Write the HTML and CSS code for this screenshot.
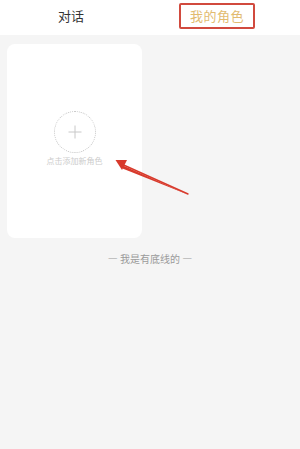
FILE: index.html
```html
<!DOCTYPE html>
<html lang="zh">
<head>
<meta charset="utf-8">
<link rel="stylesheet" href="styles.css">
</head>
<body>
<div class="page">
  <div class="tabs">
    <div class="tab">对话</div>
    <div class="tab active"><span class="active-box">我的角色</span></div>
  </div>
  <div class="content">
    <div class="grid">
      <div class="card">
        <div class="add-circle">
          <svg width="14" height="14" viewBox="0 0 14 14"><path d="M7 0.5V13.5M0.5 7H13.5" stroke="#c8c8c8" stroke-width="1" fill="none"/></svg>
        </div>
        <div class="add-label">点击添加新角色</div>
      </div>
    </div>
    <div class="end-line">— 我是有底线的 —</div>
  </div>
  <svg class="arrow" width="300" height="449" viewBox="0 0 300 449">
    <path d="M189 195 L123 165.5 L122.5 168.5 Z" fill="#d83a2c"/>
    <path d="M188 194 L122.5 164.5" stroke="#d83a2c" stroke-width="1.4" fill="none" stroke-linecap="round"/>
    <path d="M115.5 160 L127 160 L122 170 Z" fill="#d83a2c"/>
  </svg>
</div>
</body>
</html>
```
FILE: styles.css
```css
html, body {
  margin: 0;
  padding: 0;
  background: #f5f5f5;
  font-family: "Noto Sans CJK SC", "Noto Sans", sans-serif;
}
.page {
  position: relative;
  width: 300px;
  height: 449px;
  background: #f5f5f5;
  overflow: hidden;
}
.tabs {
  display: grid;
  grid-template-columns: 142px 150px;
  height: 35px;
  box-sizing: border-box;
  padding-top: 3px;
  background: #ffffff;
  align-items: start;
}
.tab {
  display: flex;
  justify-content: center;
  align-items: center;
  height: 26px;
  font-size: 13px;
  color: #333333;
  line-height: 18px;
}
.tab.active {
  color: #e2bb70;
}
.active-box {
  display: inline-block;
  box-sizing: border-box;
  width: 76px;
  height: 26px;
  line-height: 22px;
  text-align: center;
  border: 2px solid #d14a3e;
  border-radius: 2px;
  letter-spacing: 0.5px;
}
.content {
  padding: 9px 7px 0;
}
.grid {
  display: grid;
  grid-template-columns: 135px;
}
.card {
  height: 194px;
  background: #ffffff;
  border-radius: 8px;
  display: flex;
  flex-direction: column;
  align-items: center;
  justify-content: center;
  padding-bottom: 4px;
  box-sizing: border-box;
}
.add-circle {
  width: 42px;
  height: 42px;
  box-sizing: border-box;
  border: 1px dotted #c4c4c4;
  border-radius: 50%;
  display: flex;
  align-items: center;
  justify-content: center;
}
.add-label {
  margin-top: 2px;
  font-size: 8px;
  line-height: 12px;
  color: #cccccc;
}
.end-line {
  margin-top: 14px;
  text-align: center;
  font-size: 10px;
  line-height: 14px;
  color: #9a9a9a;
}
.arrow {
  position: absolute;
  left: 0;
  top: 0;
  pointer-events: none;
}
```
